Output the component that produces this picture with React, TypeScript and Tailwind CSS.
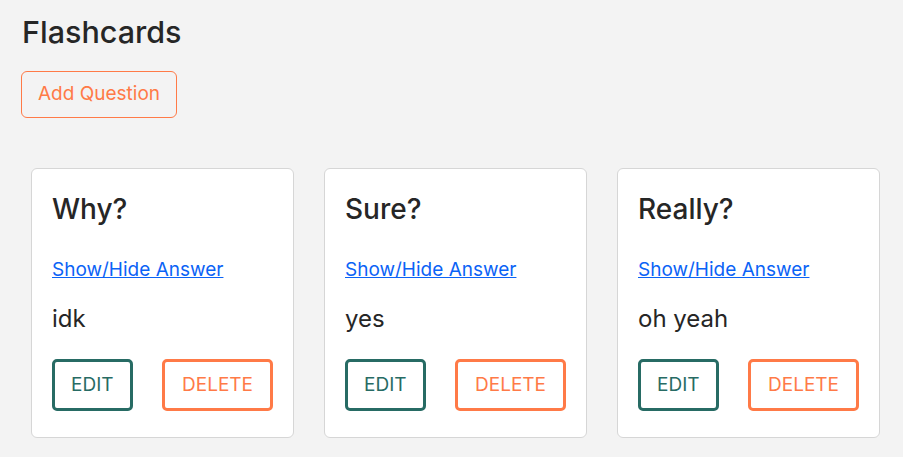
import React from "react";

type Card = {
  question: string;
  answer: string;
};

const cards: Card[] = [
  { question: "Why?", answer: "idk" },
  { question: "Sure?", answer: "yes" },
  { question: "Really?", answer: "oh yeah" },
];

function Flashcard({ card }: { card: Card }) {
  return (
    <div className="w-[263px] rounded-md border border-[#d6d6d6] bg-white px-5 pt-[22px] pb-[26px]">
      <h3 className="text-[28px] leading-[36px] font-medium text-[#262626]">{card.question}</h3>
      <a href="#" className="mt-[31px] block text-[19px] leading-[24px] text-[#0b63f6] underline">
        Show/Hide Answer
      </a>
      <p className="mt-[22px] text-[24px] leading-[30px] text-[#262626]">{card.answer}</p>
      <div className="mt-[25px] flex justify-between">
        <button className="h-[52px] rounded-[5px] border-[3px] border-[#276b64] px-4 text-[19px] text-[#276b64]">
          EDIT
        </button>
        <button className="h-[52px] rounded-[5px] border-[3px] border-[#ff7a47] px-[17px] text-[19px] text-[#ff7a47]">
          DELETE
        </button>
      </div>
    </div>
  );
}

export default function App() {
  return (
    <div className="min-h-screen bg-[#f3f3f3] px-[21px] pt-[12px] font-['Inter',sans-serif]">
      <h1 className="pl-px text-[30.5px] leading-[40px] font-medium text-[#262626]">Flashcards</h1>
      <button className="mt-[19px] h-[47px] rounded-md border border-[#ff7a47] px-4 text-[19px] text-[#ff7a47]">
        Add Question
      </button>
      <div className="mt-[50px] flex gap-[30px] pl-[10px]">
        {cards.map((c) => (
          <Flashcard key={c.question} card={c} />
        ))}
      </div>
    </div>
  );
}
